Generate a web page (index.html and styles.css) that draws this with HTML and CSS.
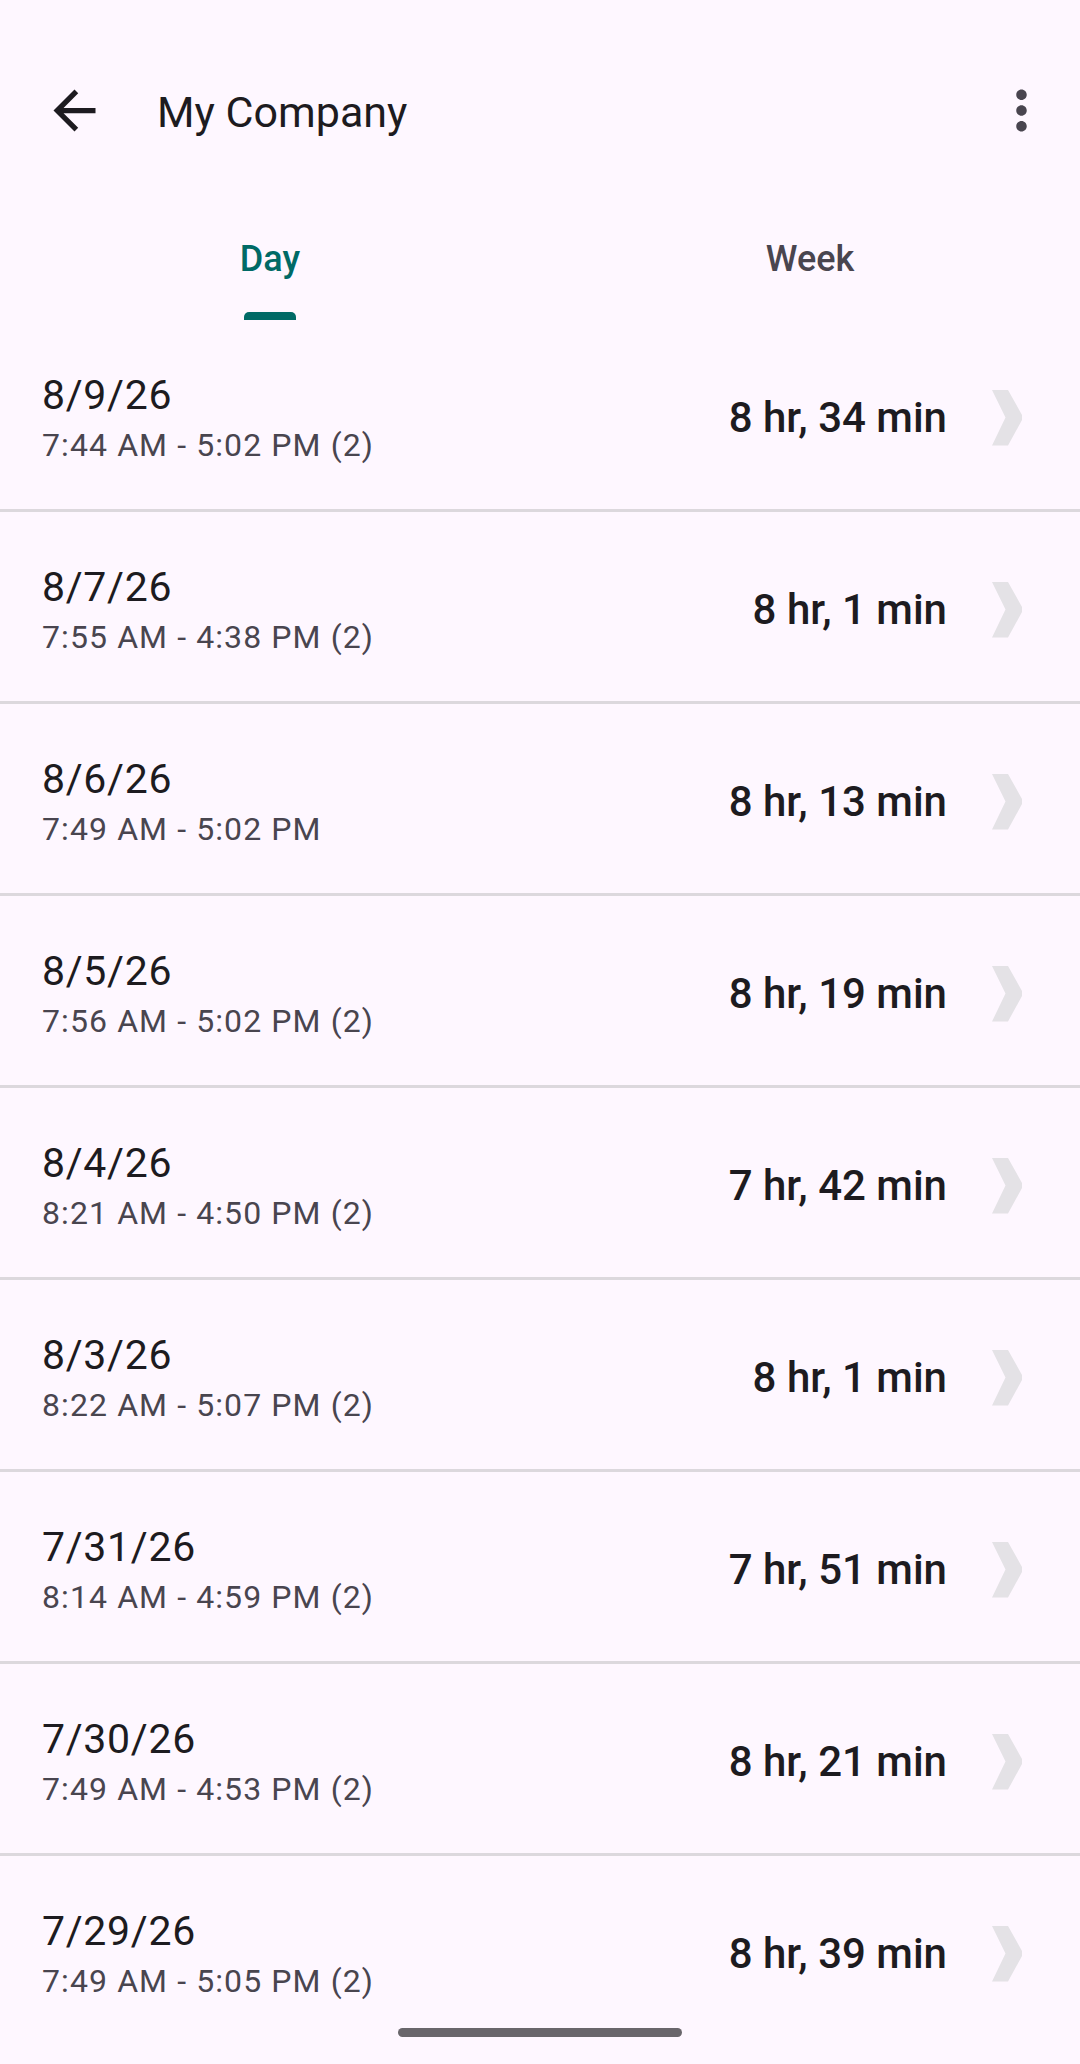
FILE: index.html
```html
<!DOCTYPE html>
<html>
<head>
    <title>My Company</title>
    <link rel="stylesheet" href="styles.css">
</head>
<body>
    <div class="status-space"></div>
    <div class="app-bar">
        <svg class="icon" viewBox="0 0 24 24"><path d="M20 11H7.83l5.59-5.59L12 4l-8 8 8 8 1.41-1.41L7.83 13H20v-2z" fill="#1d1b20"/></svg>
        <div class="title">My Company</div>
        <svg class="icon menu" viewBox="0 0 24 24"><path d="M12 8c1.1 0 2-.9 2-2s-.9-2-2-2-2 .9-2 2 .9 2 2 2zm0 2c-1.1 0-2 .9-2 2s.9 2 2 2 2-.9 2-2-.9-2-2-2zm0 6c-1.1 0-2 .9-2 2s.9 2 2 2 2-.9 2-2-.9-2-2-2z" fill="#49454f"/></svg>
    </div>

    <div class="tabs">
        <div class="tab active">
            <span class="tab-label">Day</span>
            <span class="indicator"></span>
        </div>
        <div class="tab">
            <span class="tab-label">Week</span>
            <span class="indicator"></span>
        </div>
    </div>

    <div class="list" id="list"></div>

    <div class="home-bar"></div>

    <script>
        // rows of the day list
        const days = [
            ['8/9/26', '7:44 AM - 5:02 PM (2)', '8 hr, 34 min'],
            ['8/7/26', '7:55 AM - 4:38 PM (2)', '8 hr, 1 min'],
            ['8/6/26', '7:49 AM - 5:02 PM', '8 hr, 13 min'],
            ['8/5/26', '7:56 AM - 5:02 PM (2)', '8 hr, 19 min'],
            ['8/4/26', '8:21 AM - 4:50 PM (2)', '7 hr, 42 min'],
            ['8/3/26', '8:22 AM - 5:07 PM (2)', '8 hr, 1 min'],
            ['7/31/26', '8:14 AM - 4:59 PM (2)', '7 hr, 51 min'],
            ['7/30/26', '7:49 AM - 4:53 PM (2)', '8 hr, 21 min'],
            ['7/29/26', '7:49 AM - 5:05 PM (2)', '8 hr, 39 min']
        ];

        const chevron = '<svg class="chevron" viewBox="0 0 32 56"><polygon points="1,0 17,0 31,25 31,30 17,55.5 1,55.5 14.5,27.5" fill="#e4e2e6"/></svg>';

        let html = '';
        days.forEach(d => {
            html += '<div class="row">' +
                '<div class="info"><div class="date">' + d[0] + '</div>' +
                '<div class="range">' + d[1] + '</div></div>' +
                '<div class="total">' + d[2] + '</div>' + chevron +
                '</div>';
        });
        document.getElementById('list').innerHTML = html;
    </script>
</body>
</html>
```

FILE: styles.css
```css
body {
    margin: 0;
    background-color: #fef7ff;
    font-family: Roboto, "Noto Sans", sans-serif;
    color: #1d1b20;
}
.status-space {
    height: 47px;
}
.app-bar {
    height: 126px;
    display: flex;
    align-items: center;
    padding: 0 27px 0 43px;
}
.icon {
    width: 63px;
    height: 63px;
    flex: none;
}
.title {
    flex: 1;
    margin-left: 51px;
    padding-top: 3px;
    font-size: 43px;
    line-height: 52px;
}
.tabs {
    display: flex;
    height: 147px;
}
.tab {
    flex: 1;
    display: flex;
    flex-direction: column;
    align-items: center;
    justify-content: flex-end;
}
.tab-label {
    font-size: 36px;
    font-weight: 500;
    line-height: 42px;
    color: #49454f;
    margin-bottom: 32px;
}
.indicator {
    width: 52px;
    height: 8px;
    border-radius: 5px 5px 0 0;
}
.tab.active .tab-label {
    color: #006a66;
}
.tab.active .indicator {
    background-color: #006a66;
}
.row {
    height: 183px;
    padding: 6px 57px 0 42px;
    display: flex;
    align-items: center;
    border-bottom: 3px solid #dcd8dd;
}
.row:last-child {
    border-bottom: none;
}
.info {
    flex: 1;
}
.date {
    font-size: 41px;
    line-height: 48px;
    letter-spacing: 0.7px;
}
.range {
    margin-top: 6px;
    font-size: 32px;
    line-height: 40px;
    letter-spacing: 1.1px;
    color: #49454f;
}
.total {
    font-size: 42px;
    font-weight: 500;
    line-height: 50px;
}
.chevron {
    width: 32px;
    height: 56px;
    margin-left: 44px;
    flex: none;
}
.home-bar {
    position: fixed;
    left: 398px;
    top: 2028px;
    width: 284px;
    height: 9px;
    border-radius: 5px;
    background-color: #69666b;
}
```
